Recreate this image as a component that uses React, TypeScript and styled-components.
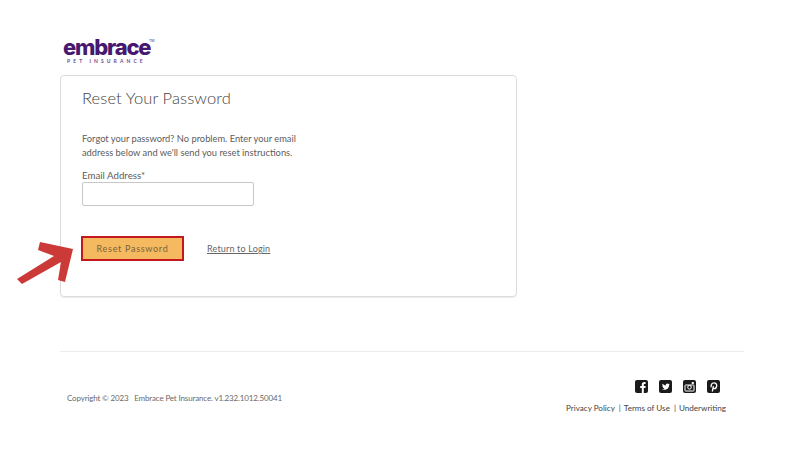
import React from "react";
import styled, { createGlobalStyle } from "styled-components";

const Global = createGlobalStyle`
  html, body { margin: 0; padding: 0; background: #fff; }
  body { font-family: "Lato", "Liberation Sans", sans-serif; color: #4a4a4a; }
`;
const Page = styled.div`
  position: relative;
  width: 804px;
  height: 469px;
  overflow: hidden;
  padding: 37px 60px 0;
  box-sizing: border-box;
`;
const Logo = styled.div`
  display: flex;
  flex-direction: column;
  align-items: flex-start;
  width: 90px;
  height: 38px;
  margin-left: 3px;
`;
const LogoWord = styled.div`
  position: relative;
  font-family: "Inter", sans-serif;
  font-weight: 800;
  font-size: 22px;
  line-height: 21px;
  letter-spacing: -1.2px;
  color: #46186f;
`;
const LogoTm = styled.span`
  position: absolute;
  top: 2px;
  right: -4px;
  font-size: 3.5px;
  line-height: 4px;
  letter-spacing: 0;
  font-weight: 400;
`;
const LogoSub = styled.div`
  font-family: "Lato", sans-serif;
  font-weight: 700;
  font-size: 5px;
  line-height: 6px;
  letter-spacing: 3.1px;
  color: #6b4a90;
  margin: 0 0 0 4px;
  white-space: nowrap;
`;
const Card = styled.section`
  width: 457px;
  height: 222px;
  box-sizing: border-box;
  border: 1px solid #dcdcdc;
  border-radius: 4px;
  box-shadow: 0 1px 1px rgba(0, 0, 0, 0.08);
  padding: 12px 21px 0;
`;
const Title = styled.h1`
  margin: 0;
  font-weight: 300;
  font-size: 16.5px;
  line-height: 21px;
  letter-spacing: 0.1px;
  color: #444;
`;
const Intro = styled.p`
  margin: 23px 0 0;
  width: 230px;
  font-size: 9.3px;
  line-height: 14px;
  color: #5c5c5c;
`;
const Field = styled.label`
  display: block;
  margin-top: 9px;
  font-size: 9.7px;
  line-height: 13px;
  color: #5c5c5c;
`;
const Input = styled.input`
  display: block;
  box-sizing: border-box;
  width: 172px;
  height: 24px;
  margin-top: 0;
  border: 1px solid #c8c8c8;
  border-radius: 2px;
  background: #fff;
`;
const Actions = styled.div`
  display: flex;
  align-items: center;
  margin-top: 30px;
  margin-left: -1px;
`;
const ResetButton = styled.button`
  box-sizing: border-box;
  width: 103px;
  height: 25px;
  border: 2px solid #c4161c;
  background: #f5b95f;
  color: #7a6440;
  font-family: "Lato", sans-serif;
  font-size: 9px;
  letter-spacing: 0.7px;
  padding: 0;
`;
const ReturnLink = styled.a`
  margin-left: 23px;
  font-size: 9px;
  letter-spacing: 0.17px;
  color: #666;
  text-decoration: underline;
`;
const Divider = styled.hr`
  width: 684px;
  height: 1px;
  margin: 54px 0 0;
  border: 0;
  background: #ececec;
`;
const Footer = styled.footer`
  display: flex;
  justify-content: space-between;
  align-items: flex-start;
  width: 684px;
  padding: 28px 18px 0 7px;
  box-sizing: border-box;
`;
const Copyright = styled.div`
  margin-top: 12px;
  font-size: 8px;
  line-height: 12px;
  letter-spacing: -0.15px;
  color: #6a6a6a;
  white-space: pre;
`;
const FooterRight = styled.div`
  display: flex;
  flex-direction: column;
  align-items: flex-end;
`;
const Socials = styled.div`
  display: flex;
  gap: 11px;
  margin-right: 6px;
`;
const FooterLinks = styled.nav`
  display: flex;
  margin-top: 9px;
  font-size: 8.1px;
  line-height: 12px;
  color: #444;
`;
const FooterLink = styled.a`
  white-space: nowrap;
`;
const Sep = styled.span`
  margin: 0 3px 0 4px;
`;
const ArrowSvg = styled.svg`
  position: absolute;
  left: 10px;
  top: 235px;
`;

const Icon: React.FC<{ children: React.ReactNode }> = ({ children }) => (
  <svg width="13" height="13" viewBox="0 0 13 13">
    <rect width="13" height="13" rx="2" fill="#1b1b1b" />
    {children}
  </svg>
);

export default function App() {
  return (
    <Page>
      <Global />
      <Logo>
        <LogoWord>
          embrace<LogoTm>TM</LogoTm>
        </LogoWord>
        <LogoSub>PET INSURANCE</LogoSub>
      </Logo>
      <Card>
        <Title>Reset Your Password</Title>
        <Intro>Forgot your password? No problem. Enter your email address below and we'll send you reset instructions.</Intro>
        <Field>
          Email Address*
          <Input type="text" />
        </Field>
        <Actions>
          <ResetButton>Reset Password</ResetButton>
          <ReturnLink>Return to Login</ReturnLink>
        </Actions>
      </Card>
      <Divider />
      <Footer>
        <Copyright>{"Copyright © 2023   Embrace Pet Insurance. v1.232.1012.50041"}</Copyright>
        <FooterRight>
          <Socials>
            <Icon>
              <path d="M8.8 13V8h1.6l.3-2H8.8V4.8c0-.6.2-.9.9-.9h.9V2.2c-.3 0-.8-.1-1.4-.1-1.5 0-2.4.9-2.4 2.5V6H5.2v2h1.6v5z" fill="#fff" />
            </Icon>
            <Icon>
              <path d="M10.6 4.3c-.3.1-.6.2-.9.2.3-.2.6-.5.7-.9-.3.2-.7.3-1 .4a1.6 1.6 0 0 0-2.7 1.4C5.400 5.300 4.300 4.700 3.500 3.800c-.4.7-.2 1.600.5 2.100-.3 0-.5-.1-.7-.2 0 .8.5 1.400 1.300 1.600-.2.1-.5.1-.7 0 .2.600.8 1.100 1.500 1.100-.7.500-1.500.8-2.400.7.7.4 1.500.7 2.500.7 3 0 4.700-2.500 4.600-4.800.3-.2.6-.4.8-.7z" fill="#fff" />
            </Icon>
            <Icon>
              <rect x="2" y="5" width="9" height="6" rx="0.5" fill="none" stroke="#fff" strokeWidth="1" />
              <circle cx="6.500" cy="7.300" r="1.800" fill="none" stroke="#fff" strokeWidth="1" />
              <rect x="8.800" y="2" width="2" height="2" fill="#fff" />
            </Icon>
            <Icon>
              <path d="M5.300 11.500l1.100-5.300M4.300 7.200C3.500 5 5 2.900 7 2.900c1.800 0 2.800 1.200 2.700 2.700-.1 1.700-1 3-2.300 3-.7 0-1.100-.4-1.300-.9" fill="none" stroke="#fff" strokeWidth="1.300" />
            </Icon>
          </Socials>
          <FooterLinks>
            <FooterLink>Privacy Policy</FooterLink>
            <Sep>|</Sep>
            <FooterLink>Terms of Use</FooterLink>
            <Sep>|</Sep>
            <FooterLink>Underwriting</FooterLink>
          </FooterLinks>
        </FooterRight>
      </Footer>
      <ArrowSvg width="70" height="55" viewBox="0 0 70 55">
        <polygon points="63,14 55,47 48,45 51,27 12,49 7,44 44,21 28,15 30,7" fill="#cc3a38" />
      </ArrowSvg>
    </Page>
  );
}
